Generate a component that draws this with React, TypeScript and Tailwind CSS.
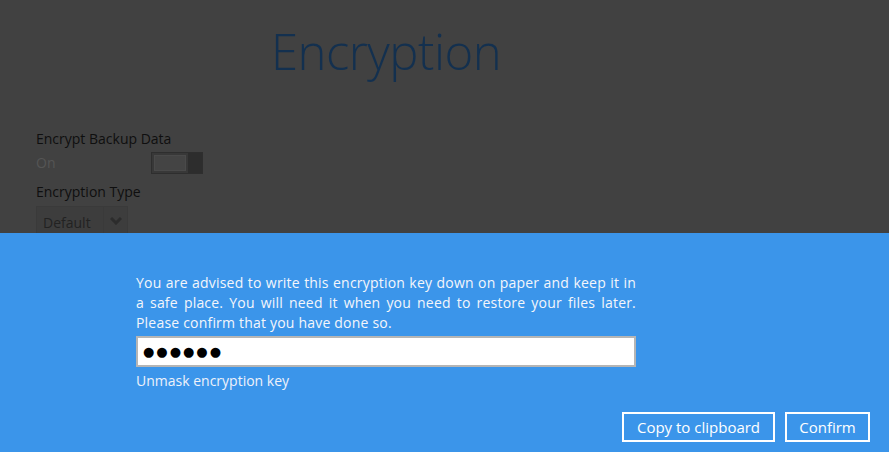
export default function App() {
  return (
    <div className="flex h-[452px] w-[889px] flex-col overflow-hidden bg-[#414141] font-['Open_Sans',sans-serif]">
      {/* Dimmed page behind the dialog */}
      <div className="h-[233px] shrink-0 overflow-hidden">
        <h1 className="ml-[271px] mt-[19px] text-[49px] font-light leading-[64px] tracking-[-0.5px] text-[#13304f]">
          Encryption
        </h1>
        <div className="ml-[36px] mt-[46px] text-[14px] text-[#0f0f0f]">
          <div className="leading-[20px]">Encrypt Backup Data</div>
          <div className="mt-[3px] flex items-center">
            <span className="w-[115px] text-[#555] leading-[20px]">On</span>
            <div className="flex h-[22px] w-[52px] border border-[#2e2e2e] bg-[#383838]">
              <div className="m-[2px] flex-1 border border-[#4a4a4a] bg-[#444]" />
              <div className="w-[14px] bg-[#2d2d2d]" />
            </div>
          </div>
          <div className="mt-[8px] leading-[20px]">Encryption Type</div>
          <div className="mt-[4px] flex h-[30px] w-[92px] border border-[#3a3a3a] bg-[#3d3d3d]">
            <span className="flex-1 pl-[6px] pt-[5px] text-[#222]">Default</span>
            <span className="flex w-[24px] items-center justify-center border-l border-[#3a3a3a]">
              <svg width="12" height="8" viewBox="0 0 12 8">
                <path d="M1 1l5 5 5-5" stroke="#2c2c2c" strokeWidth="3" fill="none" />
              </svg>
            </span>
          </div>
        </div>
      </div>

      {/* Key confirmation panel */}
      <div className="flex flex-1 flex-col bg-[#3b95ea] pl-[136px] pr-[19px] pt-[40px]">
        <p className="w-[500px] text-justify text-[14px] leading-[20px] tracking-[0.2px] text-[#f4f6fb] [text-align-last:left]">
          You are advised to write this encryption key down on paper and keep it in a safe place. You will need it when
          you need to restore your files later. Please confirm that you have done so.
        </p>
        <div className="mt-[3px] flex h-[31px] w-[500px] items-center border-2 border-[#b5b5b5] bg-white pl-[5px] font-['DejaVu_Sans',sans-serif] text-[13px] tracking-[2px] text-black">
          ●●●●●●
        </div>
        <div className="mt-[4px] text-[14px] leading-[20px] text-[#eef2fa]">Unmask encryption key</div>
        <div className="mt-[21px] flex justify-end gap-[10px]">
          <button className="h-[30px] w-[153px] border-2 border-white text-[15px] text-white">Copy to clipboard</button>
          <button className="h-[30px] w-[85px] border-2 border-white text-[15px] text-white">Confirm</button>
        </div>
      </div>
    </div>
  );
}
